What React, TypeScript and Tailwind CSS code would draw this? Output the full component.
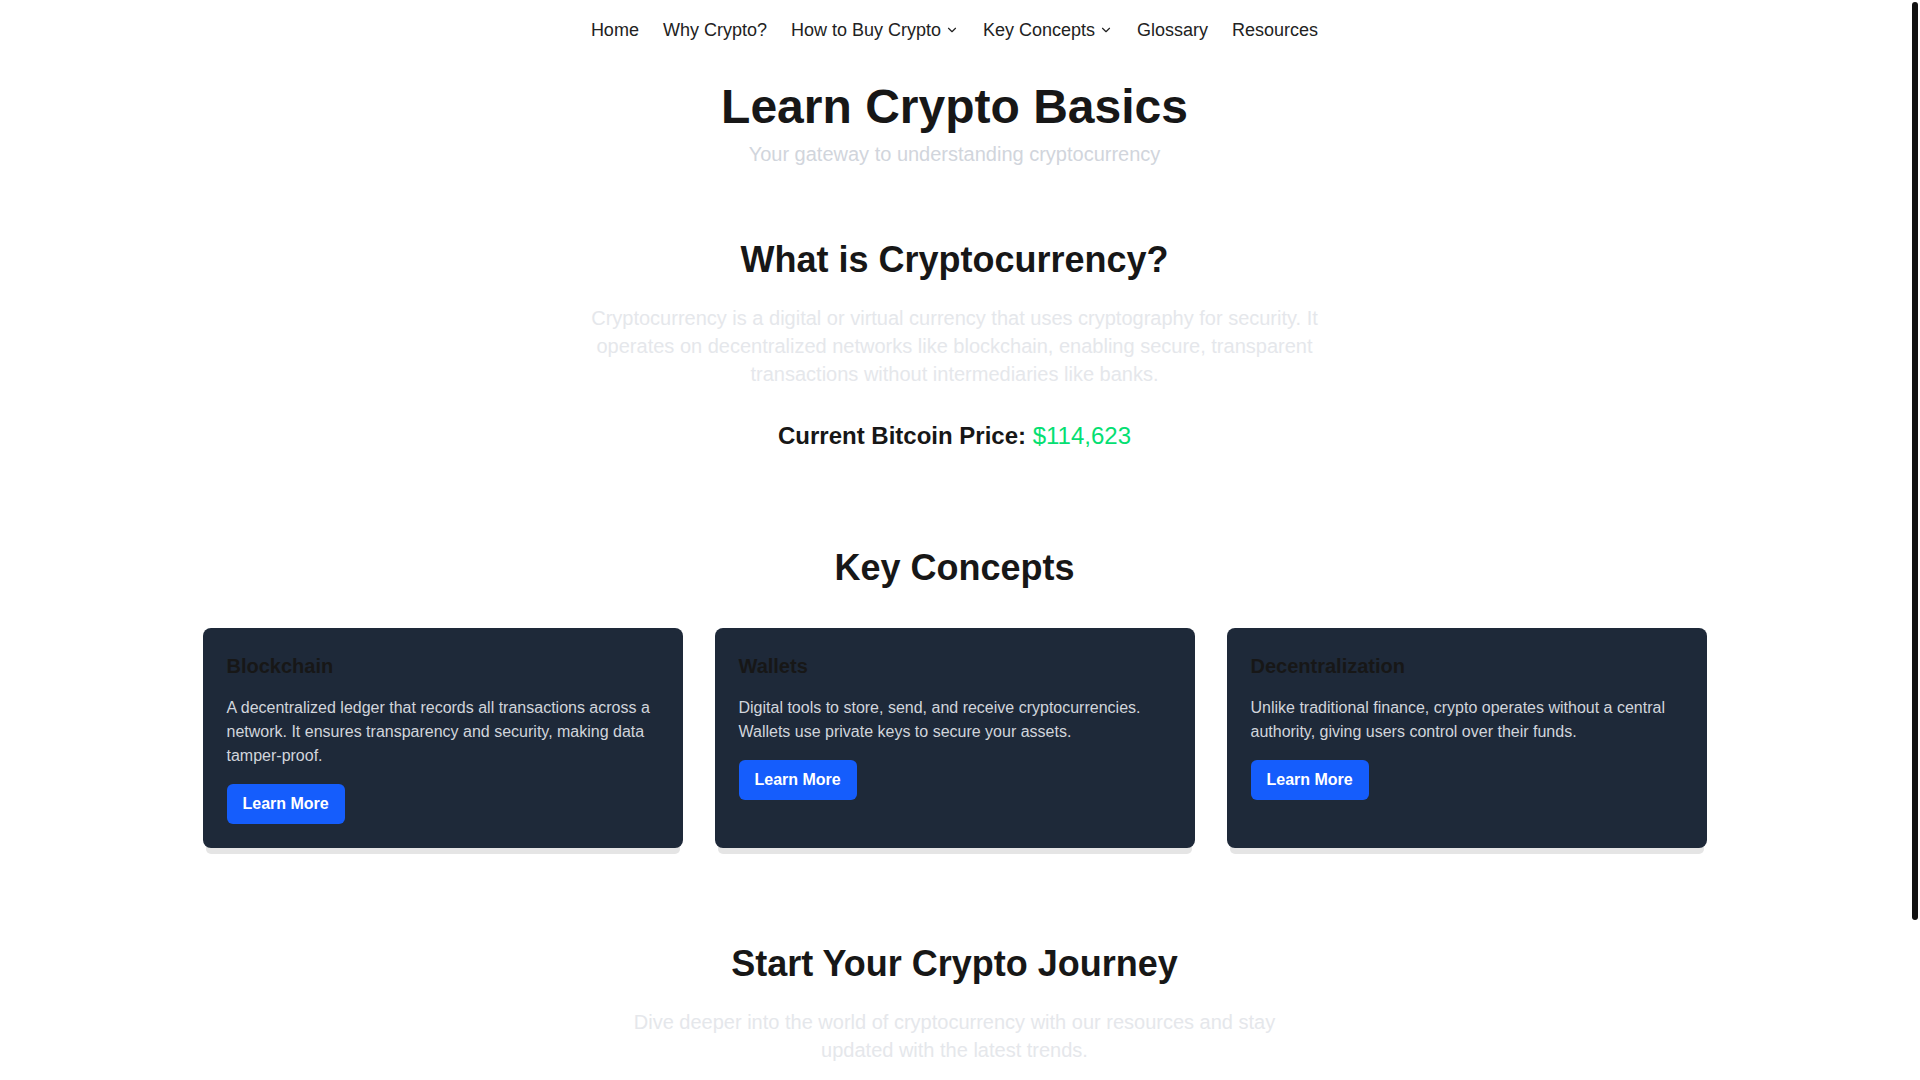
import { ChevronDown } from 'lucide-react';

interface Concept {
  title: string;
  text: string;
}

const concepts: Concept[] = [
  {
    title: 'Blockchain',
    text: 'A decentralized ledger that records all transactions across a network. It ensures transparency and security, making data tamper-proof.',
  },
  {
    title: 'Wallets',
    text: 'Digital tools to store, send, and receive cryptocurrencies. Wallets use private keys to secure your assets.',
  },
  {
    title: 'Decentralization',
    text: 'Unlike traditional finance, crypto operates without a central authority, giving users control over their funds.',
  },
];

const navItems = [
  { label: 'Home', dropdown: false },
  { label: 'Why Crypto?', dropdown: false },
  { label: 'How to Buy Crypto', dropdown: true },
  { label: 'Key Concepts', dropdown: true },
  { label: 'Glossary', dropdown: false },
  { label: 'Resources', dropdown: false },
];

function App() {
  return (
    <div className="flex min-h-screen bg-white font-['Liberation_Sans',Arial,sans-serif] text-neutral-900">
      <div className="min-w-0 flex-1">
        {/* Nav */}
        <nav className="flex justify-center gap-6 py-4">
          {navItems.map((item) => (
            <a key={item.label} href="#" className="flex items-center gap-1 text-lg leading-7 text-[#222]">
              {item.label}
              {item.dropdown && <ChevronDown size={14} strokeWidth={2} />}
            </a>
          ))}
        </nav>

        {/* Hero */}
        <header className="pt-[23px] pb-6 text-center">
          <h1 className="text-5xl font-bold">Learn Crypto Basics</h1>
          <p className="mt-[9px] text-xl text-gray-300">Your gateway to understanding cryptocurrency</p>
        </header>

        {/* What is */}
        <section className="py-12 text-center">
          <h2 className="mb-6 text-4xl font-bold">What is Cryptocurrency?</h2>
          <p className="mx-auto max-w-3xl text-xl leading-7 text-gray-200">
            Cryptocurrency is a digital or virtual currency that uses cryptography for security. It operates on
            decentralized networks like blockchain, enabling secure, transparent transactions without intermediaries
            like banks.
          </p>
          <p className="mt-8 text-2xl font-bold">
            Current Bitcoin Price: <span className="font-normal text-green-400">$114,623</span>
          </p>
        </section>

        {/* Key concepts */}
        <section className="py-12">
          <h2 className="mb-10 text-center text-4xl font-bold">Key Concepts</h2>
          <div className="mx-auto grid max-w-[1536px] grid-cols-3 gap-8 px-4">
            {concepts.map((c) => (
              <div key={c.title} className="rounded-lg bg-gray-800 p-6 shadow-[0_9px_0_-3px_#e5e5e5]">
                <h3 className="mb-4 text-xl font-bold text-neutral-900">{c.title}</h3>
                <p className="mb-4 text-base leading-6 text-gray-300">{c.text}</p>
                <button className="rounded-md bg-blue-600 px-4 py-2 font-bold text-white">Learn More</button>
              </div>
            ))}
          </div>
        </section>

        {/* Journey */}
        <section className="py-12 text-center">
          <h2 className="mb-6 text-4xl font-bold">Start Your Crypto Journey</h2>
          <p className="mx-auto max-w-2xl text-xl leading-7 text-gray-200">
            Dive deeper into the world of cryptocurrency with our resources and stay updated with the latest trends.
          </p>
          <button className="mt-8 rounded-md bg-blue-600 px-6 py-3 font-bold text-white">Explore Resources</button>
        </section>

        <footer className="py-8 text-center text-sm text-gray-400">
          © 2025 Learn Crypto Basics. All rights reserved.
        </footer>
      </div>

      {/* scrollbar strip */}
      <div className="w-[11px] shrink-0">
        <div className="ml-[3px] mt-[2px] h-[918px] w-[6px] rounded-[3px] bg-[#111]" />
      </div>
    </div>
  );
}

export default App;
